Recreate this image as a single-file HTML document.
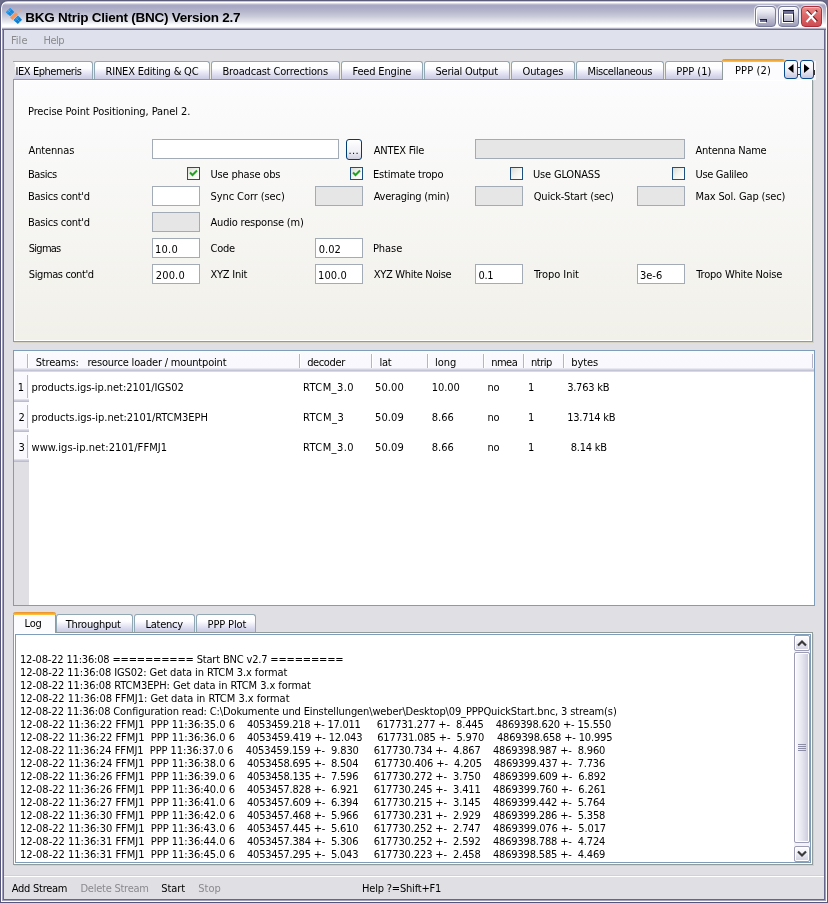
<!DOCTYPE html><html><head><meta charset="utf-8"><title>BKG Ntrip Client (BNC) Version 2.7</title><style>
html,body{margin:0;padding:0}
body{width:828px;height:903px;overflow:hidden;background:#e0dfe3;position:relative;font-family:"DejaVu Sans Condensed","Liberation Sans",sans-serif;font-size:11px;color:#000;line-height:13px}
div,span{box-sizing:border-box}
.a{position:absolute}
.t{position:absolute;white-space:pre;height:13px;line-height:13px}
.g{color:#8a8a8e}
/* window frame */
#titlebar{left:0;top:0;width:828px;height:30px;border-radius:8px 8px 0 0;background:#5c5c7c;overflow:hidden}
#tb2{left:1px;top:1px;width:826px;height:29px;border-radius:7px 7px 0 0;background:linear-gradient(to bottom,#b4b4cc 0,#fff 2px,#fff 100%)}
#tb3{left:2px;top:2px;width:824px;height:28px;border-radius:6px 6px 0 0;
 background:linear-gradient(to bottom,#ffffff 0,#ffffff 1px,#dcdce8 1px,#dcdce8 2px,#b8b8cf 2px,#b8b8cf 3px,#a9a9c5 3px,#a9a9c5 5px,#b5b5cb 9px,#c8c9d8 14px,#e2e3ea 19px,#f6f7fa 22px,#ffffff 23px,#ffffff 25px,#e8e8ee 25px,#e8e8ee 26px,#b0b0c4 26px,#b0b0c4 27px,#6e6e90 27px,#6e6e90 28px)}
.fr{border-style:solid;border-width:0 1px 1px 1px;pointer-events:none}
#menubar{left:4px;top:30px;width:820px;height:19px;background:#dfe2ec}
#menuline{left:4px;top:49px;width:820px;height:1px;background:#a0a0a8}
.cbtn{top:6px;width:21px;height:21px;border-radius:4px;border:1px solid #787c98;box-shadow:0 0 0 1px rgba(255,255,255,.75),inset 1px 1px 0 #fff;background:linear-gradient(to bottom,#fafafc 0,#e4e4ee 30%,#bcbcd0 65%,#9c9cb8 100%)}
/* tabs */
.tab{top:61px;height:19px;border:1px solid #91a7b4;border-bottom:none;border-radius:3px 3px 0 0;background:linear-gradient(to bottom,#ffffff 0,#fdfdff 35%,#e4e4f4 62%,#c6c6e0 100%)}
.tabsel{border:1px solid #919b9c;border-bottom:none;border-radius:3px 3px 0 0;background:#fcfcfe;border-top:none}
.tabsel:before{content:"";position:absolute;left:-1px;right:-1px;top:0;height:3px;border-radius:3px 3px 0 0;background:linear-gradient(to bottom,#e68b2c 0,#ffc73c 100%)}
.pane{border:1px solid #919b9c;box-shadow:inset 0 0 0 1px #fff;background:linear-gradient(to bottom,#fcfcfe 0,#f1f0e9 100%)}
.inp{height:20px;border:1px solid #a3acb6;background:#fff}
.dis{background:#e6e6e6}
.cb{width:13px;height:13px;border:1px solid #1c5180;background:linear-gradient(135deg,#dcdcd7 0,#f3f3ef 50%,#ffffff 100%)}
</style></head><body><div id="win" class="a" style="left:0;top:0;width:828px;height:903px;will-change:transform">
<div class="a" style="left:0;top:0;width:828px;height:10px;background:#6b6b8a"></div>
<div class="a" id="titlebar"><div class="a" id="tb2"></div><div class="a" id="tb3"></div></div>
<div class="a fr" style="left:0px;top:30px;width:828px;height:873px;border-color:#56567a"></div>
<div class="a fr" style="left:1px;top:30px;width:826px;height:872px;border-color:#ffffff"></div>
<div class="a fr" style="left:2px;top:30px;width:824px;height:871px;border-color:#a0a0bc"></div>
<div class="a fr" style="left:3px;top:30px;width:822px;height:870px;border-color:#66668a"></div>
<svg class="a" style="left:0;top:0" width="30" height="30" viewBox="0 0 30 30"><g transform="translate(14 16) rotate(45)"><rect x="-8.4" y="-3" width="5.9" height="6" fill="#178adf"/><rect x="-8.4" y="-3" width="2.9" height="6" fill="#2a9cf0"/><rect x="2.5" y="-3" width="5.9" height="6" fill="#0f7cd0"/><rect x="2.5" y="-3" width="2.9" height="6" fill="#1c8ee4"/><line x1="-8.4" y1="0" x2="8.4" y2="0" stroke="#8fc6ea" stroke-width="0.7" stroke-dasharray="0.9 0.9"/><line x1="-5.45" y1="-3" x2="-5.45" y2="3" stroke="#0a6cbc" stroke-width="0.5"/><line x1="5.45" y1="-3" x2="5.45" y2="3" stroke="#0a6cbc" stroke-width="0.5"/><rect x="-1.8" y="-4" width="3.6" height="8" rx="0.7" fill="#f7965c"/><line x1="0.5" y1="-4.2" x2="0.5" y2="-8.8" stroke="#f6a06c" stroke-width="0.9" stroke-dasharray="1 0.7"/></g></svg>
<span class="t" style="left:25.2px;top:10px;letter-spacing:-0.25px;font-family:Liberation Sans,sans-serif;font-weight:bold;font-size:13.5px;height:16px;line-height:16px">BKG Ntrip Client (BNC) Version 2.7</span>
<div class="a cbtn" style="left:755px;top:6px;width:21px;height:21px;"><div class="a" style="left:4px;top:12px;width:7px;height:3px;background:#6c6c90;border-top:1px solid #1c1c3c;border-right:1px solid #1c1c3c;box-shadow:-1px 1px 0 #fff"></div></div>
<div class="a cbtn" style="left:778px;top:6px;width:21px;height:21px;"><div class="a" style="left:4px;top:4px;width:11px;height:11px;border:1px solid #1c1c3c;border-top:3px solid #6c6c94;box-shadow:-1px 1px 0 #fff,inset -1px 1px 0 #fff,0 -1px 0 #1c1c3c"></div></div>
<div class="a cbtn" style="left:801px;top:6px;width:21px;height:21px;border-color:#b02c38;box-shadow:0 0 0 1px rgba(255,255,255,.6),inset 0 1px 0 #f6c8a0;background:linear-gradient(to bottom,#ec8c8c 0,#de6868 45%,#cc4c54 100%)"><svg class="a" style="left:0;top:0" width="19" height="19"><path d="M4.5 4 L14.5 15 M14.5 4 L4.5 15" stroke="#5c1418" stroke-width="2.4" transform="translate(0.45,-0.45)"/><path d="M4.5 4.5 L14 15 M14 4.5 L4.5 15" stroke="#fff" stroke-width="2.2"/></svg></div>
<div class="a" id="menubar"></div><div class="a" id="menuline"></div>
<span class="t g" style="left:10.95px;top:34px;letter-spacing:0.017px;">File</span>
<span class="t g" style="left:43.5px;top:34px;letter-spacing:-0.517px;">Help</span>
<div class="a " style="left:14px;top:62px;width:760px;height:17px;background:#ecebe4"></div>
<div class="a tab" style="left:13px;top:61px;width:80px;height:19px;border-left:none;border-radius:0 3px 0 0"></div>
<span class="t" style="left:15.6px;top:65px;letter-spacing:-0.45px;">IEX Ephemeris</span>
<div class="a tab" style="left:94px;top:61px;width:116px;height:19px;"></div>
<span class="t" style="left:105.5px;top:65px;letter-spacing:-0.203px;">RINEX Editing &amp; QC</span>
<div class="a tab" style="left:211px;top:61px;width:129px;height:19px;"></div>
<span class="t" style="left:222.5px;top:65px;letter-spacing:-0.17px;">Broadcast Corrections</span>
<div class="a tab" style="left:341px;top:61px;width:82px;height:19px;"></div>
<span class="t" style="left:352.5px;top:65px;letter-spacing:-0.17px;">Feed Engine</span>
<div class="a tab" style="left:424px;top:61px;width:86px;height:19px;"></div>
<span class="t" style="left:435.5px;top:65px;letter-spacing:-0.25px;">Serial Output</span>
<div class="a tab" style="left:511px;top:61px;width:64px;height:19px;"></div>
<span class="t" style="left:522.5px;top:65px;letter-spacing:-0.117px;">Outages</span>
<div class="a tab" style="left:576px;top:61px;width:88px;height:19px;"></div>
<span class="t" style="left:587.5px;top:65px;letter-spacing:-0.383px;">Miscellaneous</span>
<div class="a tab" style="left:665px;top:61px;width:59px;height:19px;"></div>
<span class="t" style="left:676.2px;top:65px;letter-spacing:0.017px;">PPP (1)</span>
<svg class="a" style="left:13px;top:62px" width="4" height="17"><path d="M0 0 L1 0 L2.5 3 L1.5 6 L2.2 9 L1.2 12 L2 14 L0.5 17 L0 17 Z" fill="#e0dfe3"/></svg>
<div class="a pane" style="left:13px;top:79px;width:800px;height:263px;"></div>
<div class="a " style="left:14px;top:342px;width:800px;height:1px;background:#d4d2c4"></div>
<div class="a " style="left:813px;top:81px;width:1px;height:262px;background:#d4d2c4"></div>
<div class="a tabsel" style="left:722px;top:59px;width:62px;height:21px;border-right:none"></div>
<span class="t" style="left:734.95px;top:64px;letter-spacing:0.15px;">PPP (2)</span>
<div class="a " style="left:784px;top:61px;width:32px;height:19px;background:#f6f6fa"></div>
<div class="a " style="left:798px;top:67px;width:2px;height:1px;background:#333"></div>
<div class="a " style="left:798px;top:74px;width:2px;height:1px;background:#333"></div>
<div class="a " style="left:814px;top:70px;width:1px;height:5px;background:#333"></div>
<div class="a " style="left:784px;top:60px;width:14px;height:19px;border:1px solid #0a4a8a;border-radius:3px;background:linear-gradient(to bottom,#fff 0,#f4f4fa 45%,#c8c8e0 100%)"></div>
<div class="a " style="left:800px;top:60px;width:14px;height:19px;border:1px solid #0a4a8a;border-radius:3px;background:linear-gradient(to bottom,#fff 0,#f4f4fa 45%,#c8c8e0 100%)"></div>
<svg class="a" style="left:784px;top:60px" width="31" height="19"><path d="M9.5 4 L9.5 13 L4 8.5 Z" fill="#000"/><path d="M20 4 L20 13 L25.5 8.5 Z" fill="#000"/></svg>
<span class="t" style="left:27.95px;top:105px;letter-spacing:-0.085px;">Precise Point Positioning, Panel 2.</span>
<span class="t" style="left:28.5px;top:144px;letter-spacing:-0.136px;">Antennas</span>
<div class="a inp" style="left:152px;top:139px;width:187px;height:20px;"></div>
<div class="a " style="left:346px;top:139px;width:16px;height:21px;border:1px solid #003c74;border-radius:3px;background:linear-gradient(to bottom,#fff 0,#f0f0f6 60%,#d0d0e0 100%)"></div>
<span class="t nofit" style="left:348.6px;top:144px;letter-spacing:0.3px">...</span>
<span class="t" style="left:373.75px;top:144px;letter-spacing:-0.25px;">ANTEX File</span>
<div class="a inp dis" style="left:475px;top:139px;width:210px;height:20px;"></div>
<span class="t" style="left:695.5px;top:144px;letter-spacing:-0.25px;">Antenna Name</span>
<span class="t" style="left:27.95px;top:168px;letter-spacing:-0.41px;">Basics</span>
<div class="a cb" style="left:187px;top:167px;width:13px;height:13px;"><svg class="a" style="left:1px;top:1px" width="9" height="9"><path d="M1 3.5 L3.5 6 L8 1.5" stroke="#21a121" stroke-width="2" fill="none"/></svg></div>
<span class="t" style="left:210.5px;top:168px;letter-spacing:-0.183px;">Use phase obs</span>
<div class="a cb" style="left:350px;top:167px;width:13px;height:13px;"><svg class="a" style="left:1px;top:1px" width="9" height="9"><path d="M1 3.5 L3.5 6 L8 1.5" stroke="#21a121" stroke-width="2" fill="none"/></svg></div>
<span class="t" style="left:372.95px;top:168px;letter-spacing:-0.188px;">Estimate tropo</span>
<div class="a cb" style="left:510px;top:167px;width:13px;height:13px;"></div>
<span class="t" style="left:532.95px;top:168px;letter-spacing:-0.17px;">Use GLONASS</span>
<div class="a cb" style="left:672px;top:167px;width:13px;height:13px;"></div>
<span class="t" style="left:695.5px;top:168px;letter-spacing:-0.33px;">Use Galileo</span>
<span class="t" style="left:27.95px;top:190px;letter-spacing:-0.25px;">Basics cont&#x27;d</span>
<div class="a inp" style="left:152px;top:186px;width:48px;height:20px;"></div>
<span class="t" style="left:210.5px;top:190px;letter-spacing:-0.079px;">Sync Corr (sec)</span>
<div class="a inp dis" style="left:315px;top:186px;width:48px;height:20px;"></div>
<span class="t" style="left:373.75px;top:190px;letter-spacing:-0.25px;">Averaging (min)</span>
<div class="a inp dis" style="left:475px;top:186px;width:48px;height:20px;"></div>
<span class="t" style="left:533.75px;top:190px;letter-spacing:-0.2px;">Quick-Start (sec)</span>
<div class="a inp dis" style="left:637px;top:186px;width:48px;height:20px;"></div>
<span class="t" style="left:695.5px;top:190px;letter-spacing:-0.156px;">Max Sol. Gap (sec)</span>
<span class="t" style="left:27.95px;top:216px;letter-spacing:-0.25px;">Basics cont&#x27;d</span>
<div class="a inp dis" style="left:152px;top:212px;width:48px;height:20px;"></div>
<span class="t" style="left:210.5px;top:216px;letter-spacing:-0.203px;">Audio response (m)</span>
<span class="t" style="left:28.75px;top:242px;letter-spacing:-0.73px;">Sigmas</span>
<div class="a inp" style="left:152px;top:238px;width:48px;height:20px;"></div>
<span class="t" style="left:154.95px;top:243px;letter-spacing:0.283px;">10.0</span>
<span class="t" style="left:210.5px;top:242px;letter-spacing:-0.25px;">Code</span>
<div class="a inp" style="left:315px;top:238px;width:48px;height:20px;"></div>
<span class="t" style="left:318.75px;top:243px;letter-spacing:0.017px;">0.02</span>
<span class="t" style="left:372.95px;top:242px;letter-spacing:-0.05px;">Phase</span>
<span class="t" style="left:28.75px;top:268px;letter-spacing:-0.383px;">Sigmas cont&#x27;d</span>
<div class="a inp" style="left:152px;top:264px;width:48px;height:20px;"></div>
<span class="t" style="left:155.75px;top:269px;letter-spacing:0.15px;">200.0</span>
<span class="t" style="left:210.5px;top:268px;letter-spacing:-0.25px;">XYZ Init</span>
<div class="a inp" style="left:315px;top:264px;width:48px;height:20px;"></div>
<span class="t" style="left:317.95px;top:269px;letter-spacing:0.15px;">100.0</span>
<span class="t" style="left:373.75px;top:268px;letter-spacing:-0.307px;">XYZ White Noise</span>
<div class="a inp" style="left:475px;top:264px;width:48px;height:20px;"></div>
<span class="t" style="left:478.45px;top:269px;letter-spacing:-0.25px;">0.1</span>
<span class="t" style="left:534.0px;top:268px;letter-spacing:-0.072px;">Tropo Init</span>
<div class="a inp" style="left:637px;top:264px;width:48px;height:20px;"></div>
<span class="t" style="left:639.95px;top:269px;letter-spacing:0.017px;">3e-6</span>
<span class="t" style="left:696.3px;top:268px;letter-spacing:-0.2px;">Tropo White Noise</span>
<div class="a " style="left:13px;top:350px;width:802px;height:256px;border:1px solid #7f9db9;background:#fff"></div>
<div class="a " style="left:14px;top:351px;width:800px;height:21px;background:linear-gradient(to bottom,#fbfbfe 0,#f8f8fd 17px,#e8e8f2 17px,#e8e8f2 18px,#d4d4e3 18px,#d4d4e3 19px,#c4c4d7 19px,#c4c4d7 20px,#d8d8e6 20px)"></div>
<div class="a " style="left:27px;top:354px;width:1px;height:14px;background:#b4b4cc"></div>
<div class="a " style="left:28px;top:354px;width:1px;height:14px;background:#fff"></div>
<div class="a " style="left:299px;top:354px;width:1px;height:14px;background:#b4b4cc"></div>
<div class="a " style="left:300px;top:354px;width:1px;height:14px;background:#fff"></div>
<div class="a " style="left:371px;top:354px;width:1px;height:14px;background:#b4b4cc"></div>
<div class="a " style="left:372px;top:354px;width:1px;height:14px;background:#fff"></div>
<div class="a " style="left:427px;top:354px;width:1px;height:14px;background:#b4b4cc"></div>
<div class="a " style="left:428px;top:354px;width:1px;height:14px;background:#fff"></div>
<div class="a " style="left:483px;top:354px;width:1px;height:14px;background:#b4b4cc"></div>
<div class="a " style="left:484px;top:354px;width:1px;height:14px;background:#fff"></div>
<div class="a " style="left:523px;top:354px;width:1px;height:14px;background:#b4b4cc"></div>
<div class="a " style="left:524px;top:354px;width:1px;height:14px;background:#fff"></div>
<div class="a " style="left:563px;top:354px;width:1px;height:14px;background:#b4b4cc"></div>
<div class="a " style="left:564px;top:354px;width:1px;height:14px;background:#fff"></div>
<div class="a " style="left:812px;top:354px;width:1px;height:14px;background:#b4b4cc"></div>
<div class="a " style="left:813px;top:354px;width:1px;height:14px;background:#fff"></div>
<span class="t" style="left:35.75px;top:356px;letter-spacing:-0.187px;">Streams:   resource loader / mountpoint</span>
<span class="t" style="left:307.2px;top:356px;letter-spacing:-0.383px;">decoder</span>
<span class="t" style="left:379.5px;top:356px;letter-spacing:-0.25px;">lat</span>
<span class="t" style="left:434.95px;top:356px;letter-spacing:0.017px;">long</span>
<span class="t" style="left:491.2px;top:356px;letter-spacing:-0.517px;">nmea</span>
<span class="t" style="left:530.95px;top:356px;letter-spacing:-0.45px;">ntrip</span>
<span class="t" style="left:571.2px;top:356px;letter-spacing:-0.05px;">bytes</span>
<div class="a " style="left:14px;top:372px;width:15px;height:233px;background:#e0dfe3"></div>
<div class="a " style="left:14px;top:372px;width:15px;height:30px;background:linear-gradient(to bottom,#fbfbfe 0,#f8f8fd 27px,#e0e0ec 27px,#e0e0ec 28px,#cbcbdc 28px,#cbcbdc 29px,#bcbcd0 29px)"></div>
<div class="a " style="left:27px;top:375px;width:1px;height:23px;background:#b8b8d0"></div>
<span class="t" style="left:17.7px;top:381px;">1</span>
<span class="t" style="left:31.5px;top:381px;letter-spacing:-0.057px;">products.igs-ip.net:2101/IGS02</span>
<span class="t" style="left:302.95px;top:381px;letter-spacing:0.436px;">RTCM_3.0</span>
<span class="t" style="left:374.95px;top:381px;letter-spacing:0.15px;">50.00</span>
<span class="t" style="left:431.7px;top:381px;letter-spacing:-0.05px;">10.00</span>
<span class="t" style="left:487.5px;top:381px;letter-spacing:-0.25px;">no</span>
<span class="t" style="left:527.95px;top:381px;">1</span>
<span class="t" style="left:567.2px;top:381px;letter-spacing:-0.25px;">3.763 kB</span>
<div class="a " style="left:14px;top:402px;width:15px;height:30px;background:linear-gradient(to bottom,#fbfbfe 0,#f8f8fd 27px,#e0e0ec 27px,#e0e0ec 28px,#cbcbdc 28px,#cbcbdc 29px,#bcbcd0 29px)"></div>
<div class="a " style="left:27px;top:405px;width:1px;height:23px;background:#b8b8d0"></div>
<span class="t" style="left:18.5px;top:411px;">2</span>
<span class="t" style="left:31.5px;top:411px;letter-spacing:-0.025px;">products.igs-ip.net:2101/RTCM3EPH</span>
<span class="t" style="left:302.95px;top:411px;letter-spacing:0.55px;">RTCM_3</span>
<span class="t" style="left:374.95px;top:411px;letter-spacing:0.15px;">50.09</span>
<span class="t" style="left:431.75px;top:411px;letter-spacing:0.017px;">8.66</span>
<span class="t" style="left:487.5px;top:411px;letter-spacing:-0.25px;">no</span>
<span class="t" style="left:527.95px;top:411px;">1</span>
<span class="t" style="left:567.2px;top:411px;letter-spacing:-0.25px;">13.714 kB</span>
<div class="a " style="left:14px;top:432px;width:15px;height:30px;background:linear-gradient(to bottom,#fbfbfe 0,#f8f8fd 27px,#e0e0ec 27px,#e0e0ec 28px,#cbcbdc 28px,#cbcbdc 29px,#bcbcd0 29px)"></div>
<div class="a " style="left:27px;top:435px;width:1px;height:23px;background:#b8b8d0"></div>
<span class="t" style="left:18.5px;top:441px;">3</span>
<span class="t" style="left:31.5px;top:441px;letter-spacing:0.083px;">www.igs-ip.net:2101/FFMJ1</span>
<span class="t" style="left:302.95px;top:441px;letter-spacing:0.436px;">RTCM_3.0</span>
<span class="t" style="left:374.95px;top:441px;letter-spacing:0.15px;">50.09</span>
<span class="t" style="left:431.75px;top:441px;letter-spacing:0.017px;">8.66</span>
<span class="t" style="left:487.5px;top:441px;letter-spacing:-0.25px;">no</span>
<span class="t" style="left:527.95px;top:441px;">1</span>
<span class="t" style="left:570.75px;top:441px;letter-spacing:-0.25px;">8.14 kB</span>
<div class="a " style="left:56px;top:615px;width:199px;height:17px;background:#ecebe4"></div>
<div class="a tab" style="left:56px;top:614px;width:77px;height:19px;"></div>
<span class="t" style="left:65.7px;top:618px;letter-spacing:-0.25px;">Throughput</span>
<div class="a tab" style="left:134px;top:614px;width:61px;height:19px;"></div>
<span class="t" style="left:145.5px;top:618px;letter-spacing:-0.25px;">Latency</span>
<div class="a tab" style="left:196px;top:614px;width:60px;height:19px;"></div>
<span class="t" style="left:207.6px;top:618px;letter-spacing:-0.136px;">PPP Plot</span>
<div class="a pane" style="left:13px;top:632px;width:800px;height:233px;background:#fbfbfa"></div>
<div class="a " style="left:14px;top:865px;width:800px;height:1px;background:#d4d2c4"></div>
<div class="a " style="left:813px;top:634px;width:1px;height:232px;background:#d4d2c4"></div>
<div class="a tabsel" style="left:13px;top:612px;width:43px;height:21px;"></div>
<span class="t" style="left:24.6px;top:617px;letter-spacing:-0.25px;">Log</span>
<div class="a " style="left:15px;top:634px;width:796px;height:229px;border:1px solid #7f9db9;background:#fff"></div>
<div class="a " style="left:794px;top:635px;width:16px;height:227px;background:#f2f2f7"></div>
<div class="a " style="left:794px;top:635px;width:16px;height:16px;border:1px solid #9c9cb4;border-radius:2px;box-shadow:inset 0 0 0 1px #fff;background:linear-gradient(to bottom,#fff 0,#f0f0f6 40%,#d0d0e0 100%)"></div>
<div class="a " style="left:794px;top:846px;width:16px;height:16px;border:1px solid #9c9cb4;border-radius:2px;box-shadow:inset 0 0 0 1px #fff;background:linear-gradient(to bottom,#fff 0,#f0f0f6 40%,#d0d0e0 100%)"></div>
<div class="a " style="left:794px;top:652px;width:16px;height:191px;border:1px solid #9c9cb4;border-radius:2px;box-shadow:inset 0 0 0 1px #fff;background:linear-gradient(to right,#fafafd 0,#e6e6f0 50%,#c8c8dc 100%)"></div>
<svg class="a" style="left:794px;top:635px" width="16" height="227"><path d="M4 10.5 L8 6.5 L12 10.5" stroke="#3a3a3a" stroke-width="2.2" fill="none"/><path d="M4 216.5 L8 220.5 L12 216.5" stroke="#3a3a3a" stroke-width="2.2" fill="none"/><path d="M4 109.5 H12 M4 111.5 H12 M4 113.5 H12 M4 115.5 H12" stroke="#8c8ca4" stroke-width="1"/></svg>
<span class="t" style="left:19.95px;top:653px;letter-spacing:-0.173px;">12-08-22 11:36:08 ========== Start BNC v2.7 =========</span>
<span class="t" style="left:19.95px;top:666px;letter-spacing:-0.077px;">12-08-22 11:36:08 IGS02: Get data in RTCM 3.x format</span>
<span class="t" style="left:19.95px;top:679px;letter-spacing:-0.072px;">12-08-22 11:36:08 RTCM3EPH: Get data in RTCM 3.x format</span>
<span class="t" style="left:19.95px;top:692px;letter-spacing:-0.03px;">12-08-22 11:36:08 FFMJ1: Get data in RTCM 3.x format</span>
<span class="t" style="left:19.95px;top:705px;letter-spacing:-0.125px;">12-08-22 11:36:08 Configuration read: C:\Dokumente und Einstellungen\weber\Desktop\09_PPPQuickStart.bnc, 3 stream(s)</span>
<span class="t" style="left:19.95px;top:718px;letter-spacing:-0.01px;">12-08-22 11:36:22 FFMJ1  PPP 11:36:35.0 6</span>
<span class="t" style="left:247.0px;top:718px;letter-spacing:-0.25px;">4053459.218 +- 17.011</span>
<span class="t" style="left:376.75px;top:718px;letter-spacing:-0.124px;">617731.277 +-  8.445</span>
<span class="t" style="left:495.75px;top:718px;letter-spacing:-0.17px;">4869398.620 +- 15.550</span>
<span class="t" style="left:19.95px;top:731px;letter-spacing:-0.01px;">12-08-22 11:36:22 FFMJ1  PPP 11:36:36.0 6</span>
<span class="t" style="left:247.0px;top:731px;letter-spacing:-0.17px;">4053459.419 +- 12.043</span>
<span class="t" style="left:377.2px;top:731px;letter-spacing:-0.124px;">617731.085 +-  5.970</span>
<span class="t" style="left:497.0px;top:731px;letter-spacing:-0.17px;">4869398.658 +- 10.995</span>
<span class="t" style="left:19.95px;top:744px;letter-spacing:-0.05px;">12-08-22 11:36:24 FFMJ1  PPP 11:36:37.0 6</span>
<span class="t" style="left:245.75px;top:744px;letter-spacing:-0.13px;">4053459.159 +-  9.830</span>
<span class="t" style="left:373.75px;top:744px;letter-spacing:-0.124px;">617730.734 +-  4.867</span>
<span class="t" style="left:493.0px;top:744px;letter-spacing:-0.17px;">4869398.987 +-  8.960</span>
<span class="t" style="left:19.95px;top:757px;letter-spacing:-0.01px;">12-08-22 11:36:24 FFMJ1  PPP 11:36:38.0 6</span>
<span class="t" style="left:247.0px;top:757px;letter-spacing:-0.21px;">4053458.695 +-  8.504</span>
<span class="t" style="left:374.2px;top:757px;letter-spacing:-0.082px;">617730.406 +-  4.205</span>
<span class="t" style="left:493.75px;top:757px;letter-spacing:-0.21px;">4869399.437 +-  7.736</span>
<span class="t" style="left:19.95px;top:770px;letter-spacing:-0.01px;">12-08-22 11:36:26 FFMJ1  PPP 11:36:39.0 6</span>
<span class="t" style="left:247.0px;top:770px;letter-spacing:-0.21px;">4053458.135 +-  7.596</span>
<span class="t" style="left:373.75px;top:770px;letter-spacing:-0.124px;">617730.272 +-  3.750</span>
<span class="t" style="left:493.0px;top:770px;letter-spacing:-0.13px;">4869399.609 +-  6.892</span>
<span class="t" style="left:19.95px;top:783px;letter-spacing:-0.01px;">12-08-22 11:36:26 FFMJ1  PPP 11:36:40.0 6</span>
<span class="t" style="left:247.0px;top:783px;letter-spacing:-0.21px;">4053457.828 +-  6.921</span>
<span class="t" style="left:373.75px;top:783px;letter-spacing:-0.124px;">617730.245 +-  3.411</span>
<span class="t" style="left:493.0px;top:783px;letter-spacing:-0.13px;">4869399.760 +-  6.261</span>
<span class="t" style="left:19.95px;top:796px;letter-spacing:-0.01px;">12-08-22 11:36:27 FFMJ1  PPP 11:36:41.0 6</span>
<span class="t" style="left:247.0px;top:796px;letter-spacing:-0.21px;">4053457.609 +-  6.394</span>
<span class="t" style="left:373.75px;top:796px;letter-spacing:-0.124px;">617730.215 +-  3.145</span>
<span class="t" style="left:493.0px;top:796px;letter-spacing:-0.17px;">4869399.442 +-  5.764</span>
<span class="t" style="left:19.95px;top:809px;letter-spacing:-0.01px;">12-08-22 11:36:30 FFMJ1  PPP 11:36:42.0 6</span>
<span class="t" style="left:247.0px;top:809px;letter-spacing:-0.21px;">4053457.468 +-  5.966</span>
<span class="t" style="left:373.75px;top:809px;letter-spacing:-0.124px;">617730.231 +-  2.929</span>
<span class="t" style="left:493.0px;top:809px;letter-spacing:-0.17px;">4869399.286 +-  5.358</span>
<span class="t" style="left:19.95px;top:822px;letter-spacing:-0.01px;">12-08-22 11:36:30 FFMJ1  PPP 11:36:43.0 6</span>
<span class="t" style="left:247.0px;top:822px;letter-spacing:-0.21px;">4053457.445 +-  5.610</span>
<span class="t" style="left:373.75px;top:822px;letter-spacing:-0.124px;">617730.252 +-  2.747</span>
<span class="t" style="left:493.0px;top:822px;letter-spacing:-0.13px;">4869399.076 +-  5.017</span>
<span class="t" style="left:19.95px;top:835px;letter-spacing:-0.01px;">12-08-22 11:36:31 FFMJ1  PPP 11:36:44.0 6</span>
<span class="t" style="left:247.0px;top:835px;letter-spacing:-0.21px;">4053457.384 +-  5.306</span>
<span class="t" style="left:373.75px;top:835px;letter-spacing:-0.124px;">617730.252 +-  2.592</span>
<span class="t" style="left:493.0px;top:835px;letter-spacing:-0.17px;">4869398.788 +-  4.724</span>
<span class="t" style="left:19.95px;top:848px;letter-spacing:-0.01px;">12-08-22 11:36:31 FFMJ1  PPP 11:36:45.0 6</span>
<span class="t" style="left:247.0px;top:848px;letter-spacing:-0.21px;">4053457.295 +-  5.043</span>
<span class="t" style="left:373.75px;top:848px;letter-spacing:-0.124px;">617730.223 +-  2.458</span>
<span class="t" style="left:493.0px;top:848px;letter-spacing:-0.17px;">4869398.585 +-  4.469</span>
<div class="a " style="left:4px;top:875px;width:820px;height:1px;background:#d2d1d6"></div>
<div class="a " style="left:4px;top:876px;width:820px;height:1px;background:#fff"></div>
<span class="t" style="left:11.7px;top:882px;letter-spacing:-0.25px;">Add Stream</span>
<span class="t g" style="left:80.5px;top:882px;letter-spacing:-0.25px;">Delete Stream</span>
<span class="t" style="left:161.2px;top:882px;letter-spacing:-0.05px;">Start</span>
<span class="t g" style="left:198.2px;top:882px;letter-spacing:0.017px;">Stop</span>
<span class="t" style="left:362.0px;top:882px;letter-spacing:-0.193px;">Help ?=Shift+F1</span>
</div></body></html>
